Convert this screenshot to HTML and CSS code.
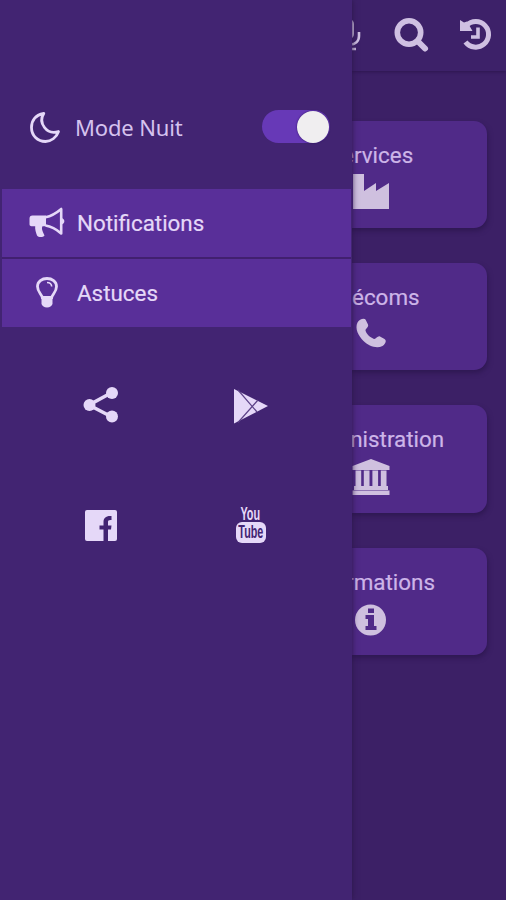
FILE: index.html
```html
<!DOCTYPE html>
<html lang="fr">
<head>
<meta charset="utf-8">
<title>Menu</title>
<link rel="stylesheet" href="styles.css">
</head>
<body>
<div class="screen">
  <header class="topbar">
    <svg class="mic" viewBox="0 0 28 36"><path d="M6 2h4a5 5 0 0 1 5 5v10a5 5 0 0 1-5 5H6z" fill="currentColor"/><path d="M2 15v4c0 6 4 8.500 9 8.500s9-3 9-8.500v-4M11 28v4M6 32h11" fill="none" stroke="currentColor" stroke-width="2.600"/></svg>
    <svg class="search" viewBox="0 0 36 36"><circle cx="15" cy="15.500" r="11.700" fill="none" stroke="currentColor" stroke-width="5.600"/><path d="M24 24.500l7 7" stroke="currentColor" stroke-width="6" stroke-linecap="round"/></svg>
    <svg class="history" viewBox="0 0 36 36"><path d="M8.500 8.500A12.800 12.800 0 1 1 7.500 25" fill="none" stroke="currentColor" stroke-width="5"/><path d="M2 3l4 2.500 3-1 5.500 9.500H2z" fill="currentColor"/><path d="M20 10.500V20h-7" fill="none" stroke="currentColor" stroke-width="3.600"/></svg>
  </header>
  <main class="cards">
    <section class="card"><h2>Services</h2>
      <svg viewBox="0 0 40 38"><path d="M2 0h11v17l12-8v8l13-8v26H2z" fill="currentColor"/></svg></section>
    <section class="card"><h2>Télécoms</h2>
      <svg viewBox="0 0 40 38"><path d="M6.500 6.500C8 3.500 13 1.500 14.500 3.500L17 8.500c1 2.500-2.500 4-2.500 6 1 4 5 7 8.500 8.500 2 .5 3.500-3.500 6-2.500l4.500 2.500c2.500 1.500 1 5-2 7-6 3-14 0-19-5C7.500 20 3.500 12.500 6.500 6.500z" fill="currentColor"/></svg></section>
    <section class="card"><h2>Administration</h2>
      <svg viewBox="0 0 40 38"><path d="M20 1l18.500 7v4H1.500V8zM4.500 12.500h5.700v16H4.500zm8.300 0h5.700v16h-5.700zm8.600 0h5.700v16h-5.700zm8.400 0h5.700v16h-5.700zM3 28h34v4H3zm-1.500 4.500h37V37h-37z" fill="currentColor"/></svg></section>
    <section class="card"><h2>Informations</h2>
      <svg viewBox="0 0 40 38"><circle cx="19.500" cy="19" r="15.500" fill="currentColor"/><path d="M17 7.500h6V12h-6zM14.500 14H23v11h2.500v4h-11v-4H17v-7h-2.500z" class="cut"/></svg></section>
  </main>
  <aside class="drawer">
    <div class="night">
      <svg class="lead" viewBox="0 0 40 36"><path d="M17.800 4.500C8.500 6 5.500 12.500 5.500 18.500c0 8 6 14 14 14 5.500 0 11-4 13-10-6.500 2-11 0-14-4s-4-9-.7-14z" fill="none" stroke="currentColor" stroke-width="2.800" stroke-linejoin="round"/></svg>
      <span class="night-label">Mode Nuit</span>
      <span class="switch"><span class="knob"></span></span>
    </div>
    <nav class="menu">
      <a class="item"><svg class="lead" viewBox="0 0 40 36"><path d="M5.500 10.500H19v10.800h-3.500c-1.500 2.500.5 6 2 9.200-1.500 2-6 2-7.500 0-1-3-2.200-6-1.800-9.200H5.500c-3 0-3-1.300-3-3v-4.800c0-2 1-3 3-3z" fill="currentColor"/><path d="M18.500 12.300c7-1.500 11-4.300 15.700-8.300v24.500c-4.700-4.200-8.700-7-15.700-8" fill="none" stroke="currentColor" stroke-width="2.600" stroke-linejoin="round"/><path d="M34.500 13c3.800.5 3.800 6 0 6.500z" fill="currentColor"/></svg><span>Notifications</span></a>
      <a class="item"><svg class="lead" viewBox="0 0 40 36"><path d="M15.300 22.500c-.5-3-4.800-5.500-4.800-11C10.500 6.500 15 3.500 20 3.500s9.500 3 9.500 8c0 5.500-4.300 8-4.800 11z" fill="none" stroke="currentColor" stroke-width="2.800"/><path d="M20 7.500c2.800 0 4.500 1.500 4.700 4" fill="none" stroke="currentColor" stroke-width="1.600"/><path d="M14.500 21h11v8c-1 2-2.500 3.500-5.500 3.500S15.500 31 14.500 29z" fill="currentColor"/></svg><span>Astuces</span></a>
    </nav>
    <div class="links">
      <svg viewBox="0 0 40 40"><path d="M31 8L9 20l22 11.500" fill="none" stroke="currentColor" stroke-width="3.600"/><g fill="currentColor"><circle cx="32" cy="8" r="6"/><circle cx="9.500" cy="20" r="6"/><circle cx="32" cy="31.500" r="6"/></g></svg>
      <svg viewBox="0 0 40 40"><path d="M4 4l34 17L4 38.500z" fill="currentColor"/><path d="M8 5l19 22M8 37.500L28 15" class="seam"/></svg>
      <svg viewBox="0 0 40 40"><rect x="5" y="5" width="32" height="31" rx="2" fill="currentColor"/><path d="M23.500 36V24.500h-4v-4h4V17c0-4 2.500-6.500 8-6v4c-3-.2-3.500.5-3.500 2v3.500h3.500l-.5 4h-3V36z" class="ink"/></svg>
      <div class="youtube"><span class="you"><span>You</span></span><span class="tube"><span>Tube</span></span></div>
    </div>
  </aside>
</div>
</body>
</html>
```

FILE: styles.css
```css
* { box-sizing: border-box; }
body { margin: 0; font-family: Roboto, "Liberation Sans", sans-serif; }
.screen { position: relative; width: 506px; height: 900px; overflow: hidden; background: #3c2066; }
svg { display: block; flex: none; }

.topbar { height: 71px; padding: 17px 12px 0 0; display: flex; justify-content: flex-end; color: #cfc0e2; background: #3d2169; box-shadow: 0 1px 3px #2d164f; }
.mic { width: 28px; height: 36px; margin-right: 27px; }
.search { width: 36px; height: 36px; margin-right: 28px; }
.history { width: 36px; height: 36px; }

.cards { display: flex; flex-direction: column; align-items: flex-end; gap: 35px; padding: 49.500px 19px 0 0; }
.card { width: 232px; height: 107.400px; padding-top: 20px; display: flex; flex-direction: column; align-items: center; gap: 4px; border-radius: 13px; background: #502a88; color: #cfc0df; box-shadow: 1px 3px 5px #2f1853; }
.card h2 { margin: 0; font-size: 22.400px; font-weight: 400; line-height: 29px; color: #cdb5e8; -webkit-text-stroke: .2px #cdb5e8; }
.card svg { width: 40px; height: 38px; }
.cut { fill: #502a88; }

.drawer { position: absolute; left: 0; top: 0; width: 352px; height: 900px; padding-top: 93px; background: #422472; color: #e5d8f8; box-shadow: 0 0 6px #2b1648; }
.night { height: 68px; padding: 0 22px 0 26px; display: flex; align-items: center; }
.lead { width: 40px; height: 36px; }
.night-label { margin-left: 9px; font: 22px "Noto Sans", sans-serif; letter-spacing: -.15px; color: #d5c2ee; }
.switch { width: 68px; height: 33px; margin: -1px 0 0 auto; border-radius: 17px; display: flex; justify-content: flex-end; align-items: center; background: #6739b7; }
.knob { width: 32px; height: 32px; margin-right: 1px; border-radius: 50%; background: #f0eef0; box-shadow: 0 0 2px #2c1060; }
.menu { margin: 28px 1px 0 2px; display: flex; flex-direction: column; gap: 2px; background: #41206f; }
.item { height: 68px; padding-left: 25px; display: flex; align-items: center; gap: 10px; background: #592f99; font-size: 22.400px; -webkit-text-stroke: .2px #e5d8f8; }
.links { margin-top: 58px; padding-left: 25px; display: grid; grid-template-columns: 150px 150px; grid-auto-rows: 40px; row-gap: 80px; justify-items: center; }
.links svg { width: 40px; height: 40px; }
.seam { fill: none; stroke: #5d4388; stroke-width: 1.200; }
.ink { fill: #422472; }
.youtube { width: 40px; height: 40px; padding-left: 1px; display: flex; flex-direction: column; align-items: center; font-family: "Liberation Sans", sans-serif; font-weight: 700; }
.you, .tube { display: flex; justify-content: center; align-items: center; }
.you { height: 17px; font-size: 19px; line-height: 17px; }
.you span { transform: scaleX(.57); }
.tube { width: 30px; height: 21px; border-radius: 6px; background: #e5d8f8; color: #422472; font-size: 18px; line-height: 21px; }
.tube span { transform: scaleX(.6); }
```
